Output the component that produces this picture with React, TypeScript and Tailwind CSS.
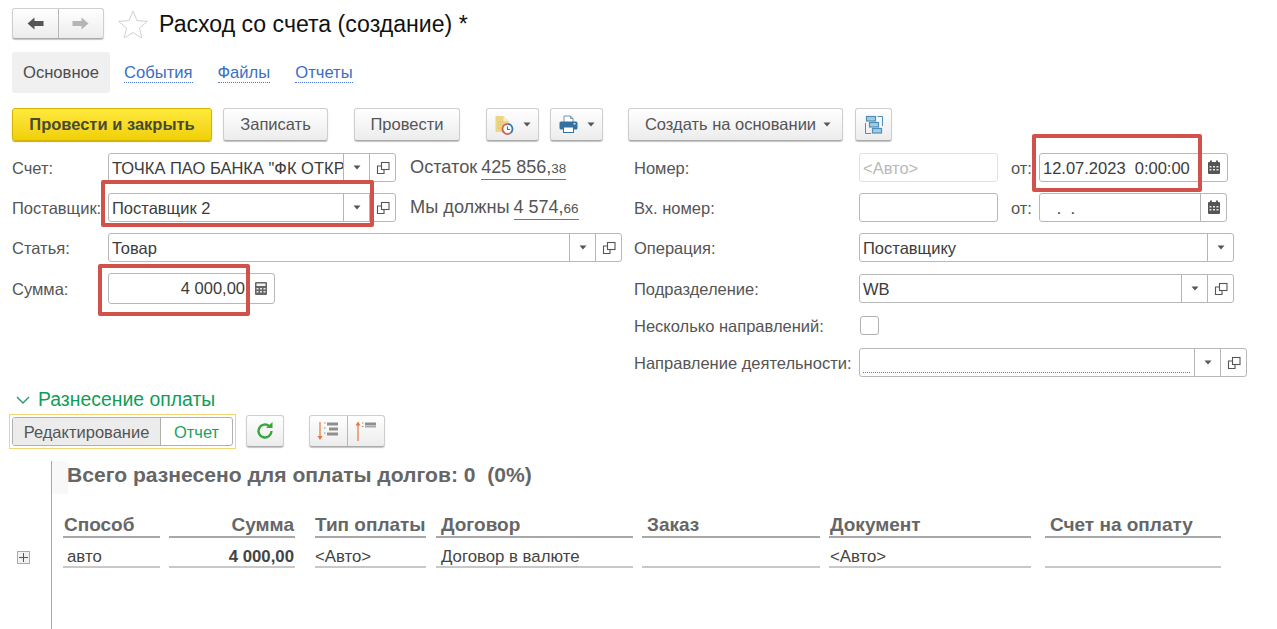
import type { ReactNode } from "react";

const btn = "flex items-center justify-center rounded-[3px] border border-[#cfcfcf] border-b-[#aaaaaa] bg-linear-to-b from-white to-[#ececec] text-[#555555] shadow-[0_1px_1px_#c4c4c4]";

const Caret = () => (
	<svg width="8" height="5" viewBox="0 0 8 5"><path d="M0.5 0.5h7L4 4.5z" fill="#555555" /></svg>
);

const CopyIcon = () => (
	<svg width="14" height="14" viewBox="0 0 14 14" fill="none" stroke="#555555" strokeWidth="1.1">
		<rect x="5.5" y="1.5" width="7.5" height="7" fill="#fff" />
		<path d="M5.5 5H1.5v7.5h6.5V8.5" />
	</svg>
);

const CalendarIcon = () => (
	<svg width="14" height="15" viewBox="0 0 14 15">
		<rect x="1" y="2" width="12" height="12" rx="1" fill="#555555" />
		<rect x="3" y="0.5" width="2" height="3" fill="#555555" />
		<rect x="9" y="0.5" width="2" height="3" fill="#555555" />
		<path d="M2.5 6h2v1.6h-2zM6 6h2v1.6H6zM9.5 6h2v1.6h-2zM2.5 9h2v1.6h-2zM6 9h2v1.6H6zM9.5 9h2v1.6h-2z" fill="#e8e8e8" />
	</svg>
);

const CalcIcon = () => (
	<svg width="14" height="15" viewBox="0 0 14 15">
		<rect x="1" y="1" width="12" height="13" rx="1" fill="#666666" />
		<rect x="2.5" y="2.5" width="9" height="2.5" fill="#f2f2f2" />
		<path d="M2.5 7h2v1.5h-2zM6 7h2v1.5H6zM9.5 7h2v1.5h-2zM2.5 10h2v1.5h-2zM6 10h2v1.5H6zM9.5 10h2v1.5h-2z" fill="#e8e8e8" />
	</svg>
);

const Arrow = ({ color, flip }: { color: string; flip?: boolean }) => (
	<svg width="17" height="13" viewBox="0 0 17 13" className={flip ? "rotate-180" : ""}>
		<path d="M0.5 6.5 7.5 0.5v3.5h9v5h-9v3.5z" fill={color} />
	</svg>
);

const Divider = () => <span className="h-full w-px bg-[#b8b8b8]" />;

const TrailingButton = ({ children, width = "w-[26px]" }: { children: ReactNode; width?: string }) => (
	<span className={`${width} flex h-full shrink-0 items-center justify-center border-l border-[#b5b5b5]`}>{children}</span>
);

interface FieldProps {
	className: string;
	text?: string;
	right?: boolean;
	disabled?: boolean;
	children?: ReactNode;
}

const Field = ({ className, text, right, disabled, children }: FieldProps) => (
	<div className={`${className} flex h-[29px] items-center rounded-[3px] border ${disabled ? "border-[#e2e2e2]" : "border-[#b8b8b8]"} bg-white`}>
		<span className={`min-w-0 flex-1 whitespace-pre pl-[3px] pr-[1px] pt-[1px] text-[16.5px] ${right ? "text-right" : ""} ${disabled ? "text-[#b9b9b9]" : "text-[#3c3c3c]"}`}>
			{text}
		</span>
		{children}
	</div>
);

const Label = ({ children, className = "w-[96px]" }: { children: ReactNode; className?: string }) => (
	<span className={`${className} shrink-0 whitespace-nowrap pt-[1px] text-[16.5px] text-[#555555]`}>{children}</span>
);

const Row = ({ children, className = "h-[29px]" }: { children: ReactNode; className?: string }) => (
	<div className={`flex items-center ${className}`}>{children}</div>
);

const Note = ({ children }: { children: ReactNode }) => (
	<span className="ml-[14px] whitespace-nowrap pt-[1px] text-[18.2px] text-[#555555]">{children}</span>
);

const Amount = ({ whole, cents }: { whole: string; cents: string }) => (
	<span className="ml-[4px] mt-[2px] border-b border-[#777777] text-[18px] leading-[20px] text-[#555555]">
		{whole}
		<span className="text-[13.5px]">{cents}</span>
	</span>
);

const columns = [
	{ title: "Способ", value: "авто", box: "w-[97px] mr-[9px]", head: "pl-[1px]", cell: "pl-[4px]" },
	{ title: "Сумма", value: "4 000,00", box: "w-[126px] mr-[20px]", head: "pr-[1px] text-right", cell: "pr-[1px] text-right font-bold" },
	{ title: "Тип оплаты", value: "<Авто>", box: "w-[111px] mr-[10px]", head: "pl-[0px]", cell: "pl-[0px]" },
	{ title: "Договор", value: "Договор в валюте", box: "w-[197px] mr-[9px]", head: "pl-[5px]", cell: "pl-[5px]" },
	{ title: "Заказ", value: "", box: "w-[178px] mr-[9px]", head: "pl-[5px]", cell: "" },
	{ title: "Документ", value: "<Авто>", box: "w-[202px] mr-[14px]", head: "pl-[1px]", cell: "pl-[1px]" },
	{ title: "Счет на оплату", value: "", box: "w-[176px]", head: "pl-[5px]", cell: "" },
];

export default function App() {
	return (
		<div className="relative h-[629px] w-[1277px] overflow-hidden bg-white font-['Liberation_Sans',Arial,sans-serif]">
			{/* title row */}
			<header className="flex h-[52px] items-start pl-[12px] pt-[8px]">
				<div className={`${btn} h-[31px] w-[92px]`}>
					<span className="flex h-full flex-1 items-center justify-center"><Arrow color="#555555" /></span>
					<Divider />
					<span className="flex h-full flex-1 items-center justify-center"><Arrow color="#b5b5b5" flip /></span>
				</div>
				<svg width="30" height="28" viewBox="0 0 30 28" className="ml-[14px] mt-[2px]">
					<path d="M15 1l4 9.6 10.3.8-7.9 6.7 2.5 10L15 22.600l-8.900 5.500 2.500-10L.7 11.400 11 10.600z" fill="#fff" stroke="#d0d0d0" />
				</svg>
				<h1 className="ml-[11px] whitespace-nowrap text-[23.1px] leading-[32px] text-[#111111]">Расход со счета (создание) *</h1>
			</header>

			{/* tabs */}
			<nav className="ml-[12px] flex h-[41px] items-center text-[16.6px]">
				<span className="flex h-full w-[98px] items-center justify-center rounded-[3px] bg-[#f0f0f0] pt-[2px] text-[#4d4d4d]">Основное</span>
				<span className="ml-[14px] mt-[2px] border-b border-dotted border-[#4a78c8] leading-[18px] text-[#3a6fc4]">События</span>
				<span className="ml-[25px] mt-[2px] border-b border-dotted border-[#4a78c8] leading-[18px] text-[#3a6fc4]">Файлы</span>
				<span className="ml-[25px] mt-[2px] border-b border-dotted border-[#4a78c8] leading-[18px] text-[#3a6fc4]">Отчеты</span>
			</nav>

			{/* command bar */}
			<div className="ml-[12px] mt-[15px] flex h-[34px] items-start text-[16.5px]">
				<button className="h-[33px] w-[200px] rounded-[3px] border border-[#d4b400] bg-linear-to-b from-[#ffe93a] to-[#f0d000] font-bold text-[#4a4a32] shadow-[0_1px_1px_#b9a850]">Провести и закрыть</button>
				<button className={`${btn} ml-[11px] h-[33px] w-[105px]`}>Записать</button>
				<button className={`${btn} ml-[26px] h-[33px] w-[106px]`}>Провести</button>
				<button className={`${btn} ml-[26px] h-[33px] w-[53px] gap-[9px]`}>
					<svg width="20" height="20" viewBox="0 0 20 20">
						<path d="M1.500 1h8l5 5v11h-13z" fill="#edd587" />
						<path d="M9.500 1l5 5h-5z" fill="#f7ecc4" />
						<path d="M4 7h5M4 10h5M4 13h3" stroke="#d8b95c" strokeDasharray="1 1" />
						<circle cx="13.500" cy="14" r="5.500" fill="#fff" />
						<path d="M13.500 9a5 5 0 0 1 5 5 5 5 0 0 1-2 4" fill="none" stroke="#3d78ad" strokeWidth="1.800" />
						<path d="M16.500 18a5 5 0 0 1-8-4 5 5 0 0 1 5-5" fill="none" stroke="#d9604f" strokeWidth="1.800" />
						<path d="M13.500 11.500v3h2.500" stroke="#3d78ad" strokeWidth="1.200" fill="none" />
					</svg>
					<Caret />
				</button>
				<button className={`${btn} ml-[11px] h-[33px] w-[53px] gap-[9px]`}>
					<svg width="19" height="19" viewBox="0 0 19 19">
						<path d="M5 1h6.500L14 3.500V8H5z" fill="#fff" stroke="#6f93b3" />
						<path d="M11.500 1v2.500H14" fill="none" stroke="#6f93b3" />
						<rect x="0.500" y="6.500" width="18" height="8" rx="1.500" fill="#36709f" />
						<rect x="4.500" y="12" width="10" height="5.500" fill="#fff" stroke="#36709f" />
						<rect x="14.500" y="8" width="2" height="1.500" fill="#cfe0ec" />
					</svg>
					<Caret />
				</button>
				<button className={`${btn} ml-[25px] h-[33px] w-[215px] gap-[7px] pl-[5px]`}>
					Создать на основании
					<Caret />
				</button>
				<button className={`${btn} ml-[12px] h-[33px] w-[37px]`}>
					<svg width="20" height="20" viewBox="0 0 20 20" fill="none" stroke="#4d8fb8" strokeWidth="1.200">
						<rect x="2.500" y="1.500" width="9" height="4.500" fill="#a6cbe0" />
						<rect x="5.500" y="7.500" width="9" height="4.500" fill="#a6cbe0" />
						<rect x="8.500" y="13.500" width="9" height="4.500" fill="#a6cbe0" />
						<path d="M1.500 8v10.500H7M13.500 1.500h5V11" strokeWidth="1" />
					</svg>
				</button>
			</div>

			{/* header fields */}
			<div className="ml-[12px] mt-[11px] flex">
				<div className="flex w-[622px] flex-col gap-[11px]">
					<Row>
						<Label>Счет:</Label>
						<Field className="w-[288px]" text={'ТОЧКА ПАО БАНКА "ФК ОТКР'}>
							<TrailingButton><Caret /></TrailingButton>
							<TrailingButton><CopyIcon /></TrailingButton>
						</Field>
						<Note>Остаток</Note>
						<Amount whole="425 856," cents="38" />
					</Row>
					<Row>
						<Label>Поставщик:</Label>
						<Field className="w-[288px]" text="Поставщик 2">
							<TrailingButton><Caret /></TrailingButton>
							<TrailingButton><CopyIcon /></TrailingButton>
						</Field>
						<Note>Мы должны</Note>
						<Amount whole="4 574," cents="66" />
					</Row>
					<Row>
						<Label>Статья:</Label>
						<Field className="w-[514px]" text="Товар">
							<TrailingButton><Caret /></TrailingButton>
							<TrailingButton><CopyIcon /></TrailingButton>
						</Field>
					</Row>
					<Row className="h-[31px]">
						<Label>Сумма:</Label>
						<div className="flex h-[31px] w-[167px] items-center rounded-[3px] border border-[#b8b8b8]">
							<span className="flex-1 whitespace-nowrap pr-[3px] text-right text-[16.5px] text-[#3c3c3c]">4 000,00</span>
							<span className="flex h-full w-[26px] items-center justify-center"><CalcIcon /></span>
						</div>
					</Row>
				</div>

				<div className="flex flex-col">
					<Row className="mb-[11px] h-[29px]">
						<Label className="w-[225px]">Номер:</Label>
						<Field className="w-[139px]" text="<Авто>" disabled />
						<span className="ml-[13px] w-[28px] pt-[1px] text-[16.5px] text-[#555555]">от:</span>
						<Field className="w-[189px]" text="12.07.2023  0:00:00">
							<TrailingButton width="w-[27px]"><CalendarIcon /></TrailingButton>
						</Field>
					</Row>
					<Row className="mb-[11px] h-[29px]">
						<Label className="w-[225px]">Вх. номер:</Label>
						<Field className="w-[139px]" />
						<span className="ml-[13px] w-[28px] pt-[1px] text-[16.5px] text-[#555555]">от:</span>
						<Field className="w-[188px]" text="   .  .">
							<TrailingButton><CalendarIcon /></TrailingButton>
						</Field>
					</Row>
					<Row className="mb-[12px] h-[29px]">
						<Label className="w-[225px]">Операция:</Label>
						<Field className="w-[375px]" text="Поставщику">
							<TrailingButton><Caret /></TrailingButton>
						</Field>
					</Row>
					<Row className="mb-[8px] h-[29px]">
						<Label className="w-[225px]">Подразделение:</Label>
						<Field className="w-[375px]" text="WB">
							<TrailingButton><Caret /></TrailingButton>
							<TrailingButton><CopyIcon /></TrailingButton>
						</Field>
					</Row>
					<Row className="mb-[8px] h-[29px]">
						<Label className="w-[226px]">Несколько направлений:</Label>
						<span className="h-[19px] w-[19px] rounded-[3px] border border-[#b0b0b0]" />
					</Row>
					<Row className="h-[29px]">
						<Label className="w-[225px]">Направление деятельности:</Label>
						<div className="flex h-[29px] w-[388px] items-center rounded-[3px] border border-[#b8b8b8]">
							<span className="ml-[3px] mt-[20px] h-0 flex-1 border-b border-dotted border-[#e8504f]" />
							<span className="ml-[4px] flex h-full w-[26px] items-center justify-center border-l border-[#b5b5b5]"><Caret /></span>
							<TrailingButton><CopyIcon /></TrailingButton>
						</div>
					</Row>
				</div>
			</div>

			{/* payment allocation */}
			<div className="ml-[16px] mt-[9px] flex h-[28px] items-center">
				<svg width="14" height="8" viewBox="0 0 14 8" fill="none" stroke="#1f9d63" strokeWidth="1.400"><path d="M1 1l6 6 6-6" /></svg>
				<span className="ml-[8px] text-[19.4px] text-[#0f9d58]">Разнесение оплаты</span>
			</div>

			<div className="ml-[9px] flex h-[36px] items-start">
				<div className="flex h-[35px] w-[227px] items-center justify-center border border-[#f2d675]">
					<div className="flex h-[29px] w-[221px] overflow-hidden rounded-[3px] border border-[#b0b0b0] text-[16.5px]">
						<span className="flex w-[148px] items-center justify-center border-r border-[#b0b0b0] bg-[#ececec] pt-[1px] text-[#555555]">Редактирование</span>
						<span className="flex flex-1 items-center justify-center pt-[1px] text-[#1aa260]">Отчет</span>
					</div>
				</div>
				<button className={`${btn} ml-[10px] mt-[1px] h-[32px] w-[38px]`}>
					<svg width="18" height="18" viewBox="0 0 18 18" fill="none">
						<path d="M15.500 9A6.500 6.500 0 1 1 13.300 4.100" stroke="#35a83a" strokeWidth="2.400" />
						<path d="M10 6h6.500V0z" fill="#35a83a" />
					</svg>
				</button>
				<div className={`${btn} ml-[25px] mt-[1px] h-[32px] w-[76px]`}>
					<span className="flex h-full flex-1 items-center justify-center">
						<svg width="24" height="22" viewBox="0 0 24 22">
							<path d="M4 2v15" stroke="#e8743b" strokeWidth="1.200" />
							<path d="M1.500 16h5L4 20z" fill="#e8743b" />
							<path d="M11 2.500h11v3H11zM13 7.500h9v3h-9zM11 12.500h11v3H11z" fill="#8f8f8f" />
							<path d="M8 2.500h1.500v1H8zM8 7.500h1.500v1H8zM8 12.500h1.500v1H8z" fill="#8f8f8f" />
						</svg>
					</span>
					<Divider />
					<span className="flex h-full flex-1 items-center justify-center">
						<svg width="24" height="22" viewBox="0 0 24 22">
							<path d="M4 5v16" stroke="#e8743b" strokeWidth="1.200" />
							<path d="M1.500 5.500h5L4 1.500z" fill="#e8743b" />
							<path d="M11 2.500h11v3H11zM8 2.500h1.500v1H8zM8 6h1.500v1H8z" fill="#8f8f8f" />
							<path d="M11 6h11v1.500H11z" fill="#a8a8a8" />
						</svg>
					</span>
				</div>
			</div>

			{/* report block */}
			<div className="ml-[12px] mt-[11px] flex h-[169px]">
				<div className="flex w-[39px] flex-col">
					<span className="ml-[5px] mt-[90px] flex h-[13px] w-[13px] items-center justify-center border border-[#aaaaaa] bg-[#f2f2f2]">
						<svg width="9" height="9" viewBox="0 0 9 9"><path d="M4.500 0v9M0 4.500h9" stroke="#555555" /></svg>
					</span>
				</div>
				<div className="relative flex flex-col border-l border-[#a8a8a8] pl-[11px]">
					<span className="absolute left-0 top-0 h-[33px] w-[16px] bg-[#f8f8f8]" />
					<h2 className="relative ml-[4px] h-[30px] whitespace-pre text-[21.1px] font-bold leading-[28px] text-[#666666]">Всего разнесено для оплаты долгов: 0  (0%)</h2>
					<div className="mt-[23px] flex">
						{columns.map((col) => (
							<div key={col.title} className={col.box}>
								<div className={`h-[24px] whitespace-nowrap border-b-2 border-[#a8a8a8] text-[19px] font-bold leading-[22px] text-[#666666] ${col.head}`}>
									{col.title}
								</div>
								<div className={`mt-[8px] h-[22px] whitespace-nowrap border-b-2 border-[#c8c8c8] pt-[1px] text-[16.800px] leading-[20px] text-[#444444] ${col.cell}`}>
									{col.value}
								</div>
							</div>
						))}
					</div>
				</div>
			</div>

			{/* red annotations */}
			<span className="absolute left-[1032px] top-[134px] h-[58px] w-[170px] rounded-[2px] border-[4px] border-[#d0524a]" />
			<span className="absolute left-[101px] top-[180px] h-[47px] w-[273px] rounded-[2px] border-[4px] border-[#d0524a]" />
			<span className="absolute left-[98px] top-[264px] h-[52px] w-[152px] rounded-[2px] border-[4px] border-[#d0524a]" />
		</div>
	);
}
